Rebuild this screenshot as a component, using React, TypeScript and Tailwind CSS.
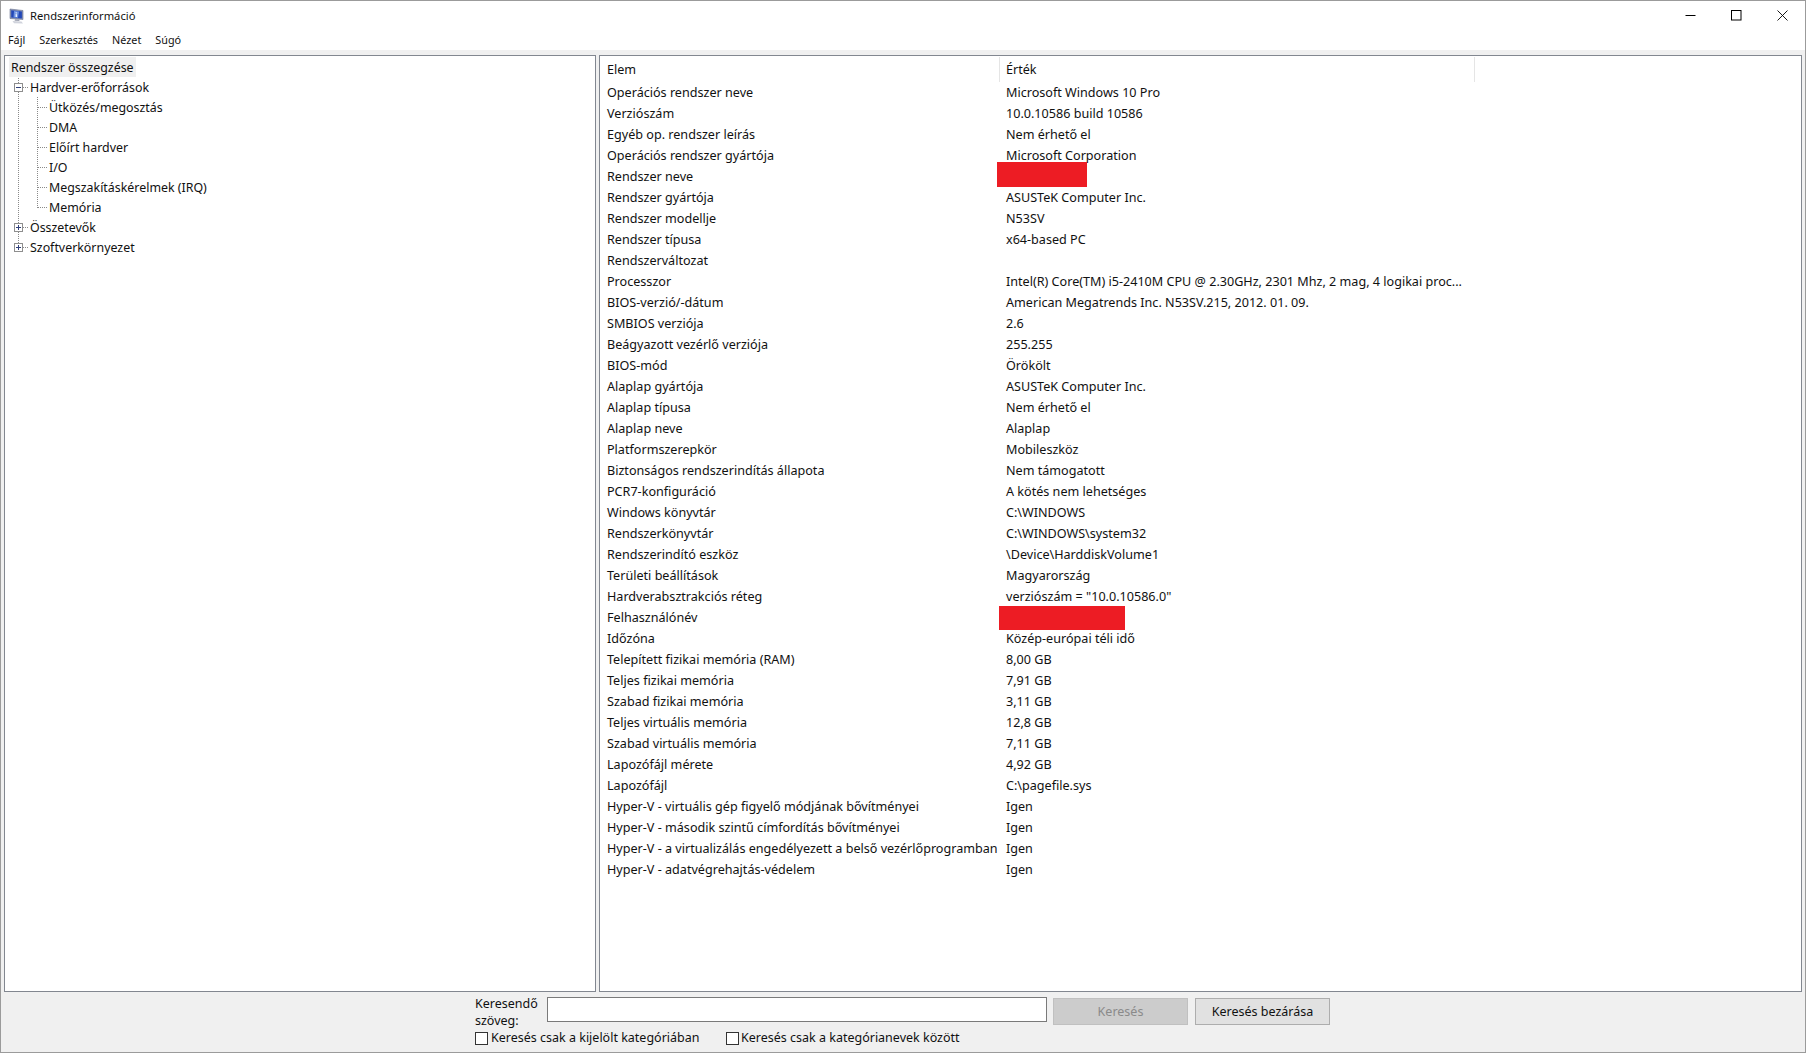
const font = "font-['Noto_Sans',sans-serif]"

const rows: [string, string][] = [
  ['Operációs rendszer neve', 'Microsoft Windows 10 Pro'],
  ['Verziószám', '10.0.10586 build 10586'],
  ['Egyéb op. rendszer leírás', 'Nem érhető el'],
  ['Operációs rendszer gyártója', 'Microsoft Corporation'],
  ['Rendszer neve', ''],
  ['Rendszer gyártója', 'ASUSTeK Computer Inc.'],
  ['Rendszer modellje', 'N53SV'],
  ['Rendszer típusa', 'x64-based PC'],
  ['Rendszerváltozat', ''],
  ['Processzor', 'Intel(R) Core(TM) i5-2410M CPU @ 2.30GHz, 2301 Mhz, 2 mag, 4 logikai proc...'],
  ['BIOS-verzió/-dátum', 'American Megatrends Inc. N53SV.215, 2012. 01. 09.'],
  ['SMBIOS verziója', '2.6'],
  ['Beágyazott vezérlő verziója', '255.255'],
  ['BIOS-mód', 'Örökölt'],
  ['Alaplap gyártója', 'ASUSTeK Computer Inc.'],
  ['Alaplap típusa', 'Nem érhető el'],
  ['Alaplap neve', 'Alaplap'],
  ['Platformszerepkör', 'Mobileszköz'],
  ['Biztonságos rendszerindítás állapota', 'Nem támogatott'],
  ['PCR7-konfiguráció', 'A kötés nem lehetséges'],
  ['Windows könyvtár', 'C:\\WINDOWS'],
  ['Rendszerkönyvtár', 'C:\\WINDOWS\\system32'],
  ['Rendszerindító eszköz', '\\Device\\HarddiskVolume1'],
  ['Területi beállítások', 'Magyarország'],
  ['Hardverabsztrakciós réteg', 'verziószám = "10.0.10586.0"'],
  ['Felhasználónév', ''],
  ['Időzóna', 'Közép-európai téli idő'],
  ['Telepített fizikai memória (RAM)', '8,00 GB'],
  ['Teljes fizikai memória', '7,91 GB'],
  ['Szabad fizikai memória', '3,11 GB'],
  ['Teljes virtuális memória', '12,8 GB'],
  ['Szabad virtuális memória', '7,11 GB'],
  ['Lapozófájl mérete', '4,92 GB'],
  ['Lapozófájl', 'C:\\pagefile.sys'],
  ['Hyper-V - virtuális gép figyelő módjának bővítményei', 'Igen'],
  ['Hyper-V - második szintű címfordítás bővítményei', 'Igen'],
  ['Hyper-V - a virtualizálás engedélyezett a belső vezérlőprogramban', 'Igen'],
  ['Hyper-V - adatvégrehajtás-védelem', 'Igen'],
]

const tree = [
  { label: 'Hardver-erőforrások', child: false },
  { label: 'Ütközés/megosztás', child: true },
  { label: 'DMA', child: true },
  { label: 'Előírt hardver', child: true },
  { label: 'I/O', child: true },
  { label: 'Megszakításkérelmek (IRQ)', child: true },
  { label: 'Memória', child: true },
  { label: 'Összetevők', child: false },
  { label: 'Szoftverkörnyezet', child: false },
]

function AppIcon() {
  return (
    <svg width="16" height="16" viewBox="0 0 16 16" className="mt-[1px] shrink-0">
      <path d="M1 1 L14 2.5 V11.5 L1 10.5 Z" fill="#8a94b4" stroke="#6a7390" strokeWidth="0.6" />
      <path d="M2.2 2.2 L12.9 3.4 V10.4 L2.2 9.5 Z" fill="#2348b8" />
      <path d="M5 3 L10 3.6 L9 9.8 L4.5 9.4 Z" fill="#6f93e0" />
      <path d="M6.6 4.2 L8 4.4 V5.4 L6.6 5.2 Z M6.6 6 L8 6.2 V9 L6.6 8.9 Z" fill="#e8f0ff" />
      <path d="M6 11.3 L10 11.6 L10.6 13 L5.6 12.8 Z" fill="#9a9fae" />
      <path d="M3.5 13 L12.5 13.4 L14 15.4 L5 15.2 Z" fill="#d0d3dc" />
    </svg>
  )
}

function TreeLines() {
  const box = (x: number, y: number, open: boolean) => (
    <g key={y}>
      <rect x={x + 0.5} y={y + 0.5} width="8" height="8" fill="#fff" stroke="#8e8e8e" />
      <path d={`M${x + 2} ${y + 4.5}H${x + 7}`} stroke="#30407a" />
      {!open && <path d={`M${x + 4.5} ${y + 2}V${y + 7}`} stroke="#30407a" />}
    </g>
  )
  return (
    <svg width="60" height="210" className="absolute left-0 top-0">
      <path
        d="M13.5 22V192M32.5 41V152M33 51.5H42M33 71.5H42M33 91.5H42M33 111.5H42M33 131.5H42M33 151.5H42M18 31.5H24M18 171.5H24M18 191.5H24"
        stroke="#8a8a8a"
        strokeDasharray="1 1"
        fill="none"
      />
      {box(9, 27, true)}
      {box(9, 167, false)}
      {box(9, 187, false)}
    </svg>
  )
}

function TreePanel() {
  return (
    <div className="relative w-[592px] shrink-0 border border-[#828790] bg-white pt-[1px] pl-[4px] text-[12.4px] text-[#111]">
      <div className="h-5 w-fit bg-[#f0f0f0] px-[2px] leading-[21px]">Rendszer összegzése</div>
      <TreeLines />
      {tree.map((t) => (
        <div key={t.label} className={`h-5 leading-[21px] ${t.child ? 'pl-[40px]' : 'pl-[21px]'}`}>
          {t.label}
        </div>
      ))}
    </div>
  )
}

function InfoPanel() {
  return (
    <div className="relative min-w-0 flex-1 border border-[#828790] bg-white pt-[1px] text-[12.6px] text-[#111]">
      <div className="flex h-[25px] leading-[25px]">
        <div className="w-[400px] border-r border-[#e5e5e5] pl-[7px]">Elem</div>
        <div className="w-[475px] border-r border-[#e5e5e5] pl-[6px]">Érték</div>
      </div>
      {rows.map(([k, v]) => (
        <div key={k} className="flex h-[21px] leading-[21px]">
          <div className="w-[400px] shrink-0 overflow-hidden whitespace-nowrap pl-[7px]">{k}</div>
          <div className="whitespace-nowrap pl-[6px]">{v}</div>
        </div>
      ))}
      <div className="absolute left-[397px] top-[106px] h-[25px] w-[90px] bg-[#ed1c24]" />
      <div className="absolute left-[399px] top-[550px] h-[24px] w-[126px] bg-[#ed1c24]" />
    </div>
  )
}

function SearchBar() {
  return (
    <div className="h-[60px] shrink-0 pl-[474px] text-[12.5px] text-[#111]">
      <div className="flex h-[36px] items-start pt-[5px]">
        <div className="-mt-[2px] w-[72px] leading-[17px]">
          Keresendő
          <br />
          szöveg:
        </div>
        <div className="h-[25px] w-[500px] border border-[#7a7a7a] bg-white" />
        <div className="ml-[6px] mt-[1px] flex h-[27px] w-[135px] items-center justify-center border border-[#c0c0c0] bg-[#cccccc] pt-[1px] text-[#8a8a8a]">
          Keresés
        </div>
        <div className="ml-[7px] mt-[1px] flex h-[27px] w-[135px] items-center justify-center border border-[#adadad] bg-[#e1e1e1] pt-[1px]">
          Keresés bezárása
        </div>
      </div>
      <div className="flex h-[21px] items-center">
        <span className="h-[13px] w-[13px] border border-[#333] bg-white" />
        <span className="ml-[3px] w-[235px]">Keresés csak a kijelölt kategóriában</span>
        <span className="h-[13px] w-[13px] border border-[#333] bg-white" />
        <span className="ml-[2px]">Keresés csak a kategórianevek között</span>
      </div>
    </div>
  )
}

function WindowButtons() {
  return (
    <div className="ml-auto flex items-center text-black">
      <div className="flex w-[46px] justify-center">
        <svg width="11" height="11" viewBox="0 0 11 11"><path d="M0.5 5.5H10.5" stroke="#000" /></svg>
      </div>
      <div className="flex w-[46px] justify-center">
        <svg width="11" height="11" viewBox="0 0 11 11"><rect x="0.5" y="0.5" width="9.5" height="9.5" fill="none" stroke="#000" /></svg>
      </div>
      <div className="flex w-[46px] justify-center">
        <svg width="11" height="11" viewBox="0 0 11 11"><path d="M0.5 0.5L10.5 10.5M10.5 0.5L0.5 10.5" stroke="#000" strokeWidth="0.9" /></svg>
      </div>
    </div>
  )
}

export default function App() {
  return (
    <div className={`${font} flex h-[1053px] w-[1806px] flex-col border border-[#9b9b9b] bg-[#f0f0f0]`}>
      <div className="flex h-[29px] shrink-0 items-center bg-white pl-[8px] text-[11.2px] text-[#111]">
        <AppIcon />
        <span className="ml-[5px] pt-[1px]">Rendszerinformáció</span>
        <WindowButtons />
      </div>
      <div className="flex h-[20px] shrink-0 items-center gap-[14px] bg-white pl-[7px] pt-[1px] text-[10.8px] text-[#111]">
        <span>Fájl</span>
        <span>Szerkesztés</span>
        <span>Nézet</span>
        <span>Súgó</span>
      </div>
      <div className="flex min-h-0 flex-1 gap-[3px] pl-[3px] pr-[3px] pt-[5px]">
        <TreePanel />
        <InfoPanel />
      </div>
      <SearchBar />
    </div>
  )
}
